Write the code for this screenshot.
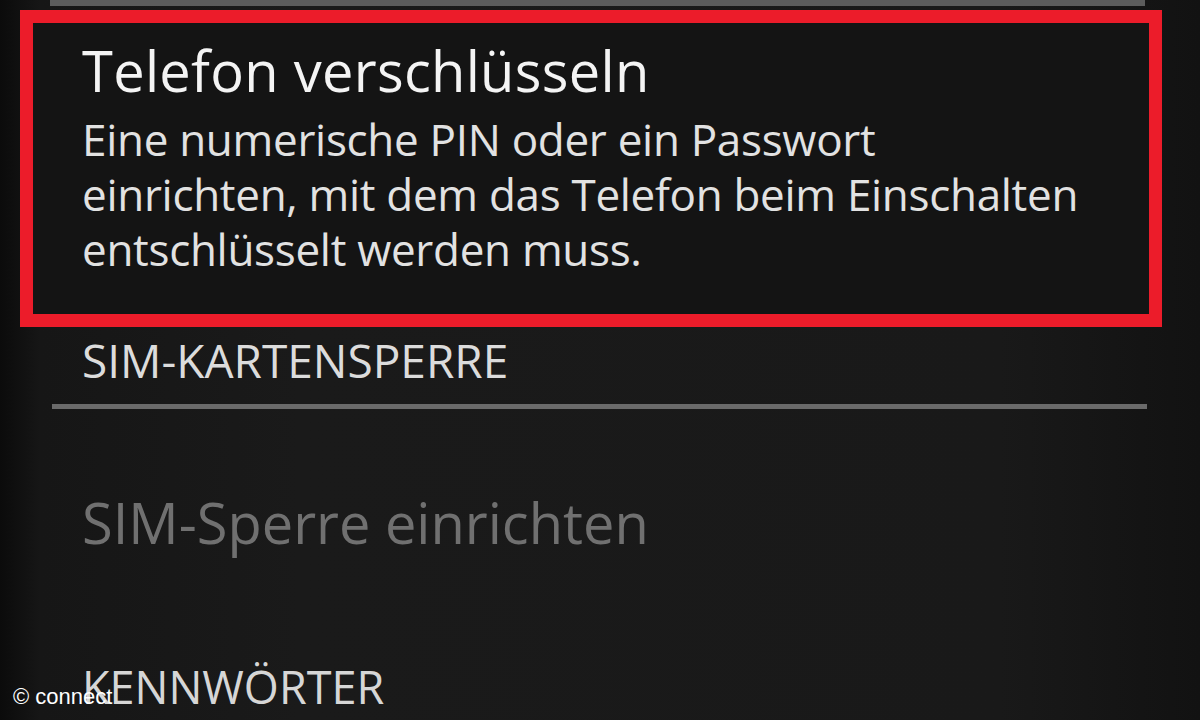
export default function App() {
  return (
    <div
      className="relative w-[1200px] h-[720px] overflow-hidden bg-[linear-gradient(90deg,#0b0b0b_0px,#161616_40px,#1a1a1a_300px,#191919_1000px,#121212_1200px)]"
      style={{ fontFamily: '"Open Sans", "Noto Sans", sans-serif' }}
    >
      {/* vorheriger Eintrag, nur Unterkante sichtbar */}
      <div className="ml-[50px] w-[1095px] h-[6px] bg-[#5c5c5c]" />

      {/* markierter Eintrag */}
      <div className="mt-[4px] ml-[20px] w-[1142px] h-[317px] border-[13px] border-[#ec1c2a] bg-[#141414] pl-[49px] pt-[15px]">
        <div className="text-[56px] leading-[64px] text-[#f4f4f4] tracking-[0.3px]">
          Telefon verschlüsseln
        </div>
        <div className="mt-[10px] text-[44px] leading-[55px] text-[#e2e2e2] tracking-[-0.3px]">
          Eine numerische PIN oder ein Passwort
          <br />
          einrichten, mit dem das Telefon beim Einschalten
          <br />
          entschlüsselt werden muss.
        </div>
      </div>

      <div className="mt-[8px] pl-[82px] text-[46px] leading-[50px] text-[#dcdcdc]">
        SIM-KARTENSPERRE
      </div>
      <div className="mt-[19px] ml-[52px] w-[1095px] h-[5px] bg-[#6a6a6a]" />

      <div className="mt-[81px] pl-[82px] text-[56px] leading-[64px] text-[#707070]">
        SIM-Sperre einrichten
      </div>

      <div className="mt-[108px] pl-[82px] text-[45px] leading-[50px] text-[#d6d6d6]">
        KENNWÖRTER
      </div>

      <div
        className="absolute left-[13px] top-[686px] text-[22px] leading-[22px] text-white"
        style={{ fontFamily: '"Liberation Sans", Arial, sans-serif' }}
      >
        © connect
      </div>
    </div>
  );
}
